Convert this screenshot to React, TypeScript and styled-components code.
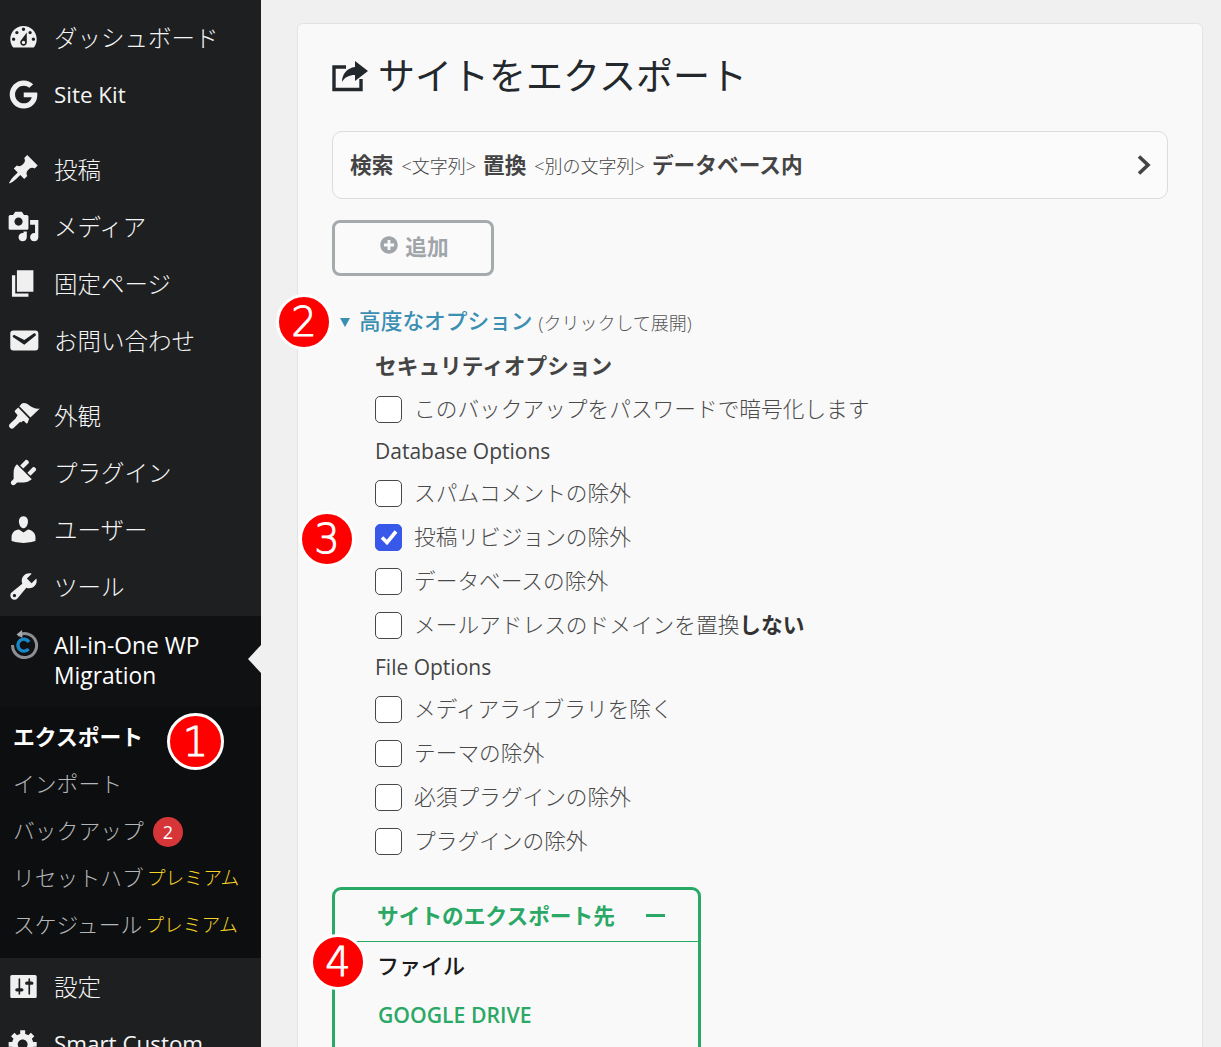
import React from "react";
import styled, { createGlobalStyle } from "styled-components";
import { FaGoogle, FaPlusCircle } from "react-icons/fa";

const FONT = `"Open Sans", "Noto Sans CJK JP", sans-serif`;

const Global = createGlobalStyle`
  html, body { margin: 0; padding: 0; height: 1047px; overflow: hidden; background: #f0f0f1; }
  * { box-sizing: border-box; }
  body { font-family: ${FONT}; }
`;

const Page = styled.div`
  position: relative;
  display: flex;
  width: 1221px;
  height: 1047px;
  overflow: hidden;
  background: #f0f0f1;
`;

/* Japanese glyphs sit lower than in the reference font: lifts a label within its centred row */
const Lift = styled.span`
  display: inline-block;
  padding-bottom: ${(p: { $by?: number }) => p.$by ?? 4}px;
`;

const Sidebar = styled.aside`
  flex: 0 0 261px;
  height: 1047px;
  padding-top: 9px;
  background: #1e1f21;
  overflow: hidden;
`;

const MenuGroup = styled.div`
  margin-bottom: ${(p: { $gap?: boolean }) => (p.$gap ? "18px" : "0")};
`;

const MenuRow = styled.div<{ $latin?: boolean }>`
  display: flex;
  align-items: center;
  height: 57px;
  color: #f5f5f5;
  font-size: ${(p) => (p.$latin ? "22.4px" : "23.5px")};
  font-weight: ${(p) => (p.$latin ? 400 : 300)};
  white-space: nowrap;
`;

const IconSlot = styled.span`
  flex: 0 0 54px;
  display: flex;
  justify-content: center;
  padding-right: 7px;
  color: #f0f0f1;
`;

const ActiveRow = styled.div`
  position: relative;
  display: flex;
  align-items: center;
  height: 90px;
  margin-top: 1px;
  background: #101113;
  color: #fff;
  font-size: 22.8px;
  line-height: 30px;
`;

const ActiveIcon = styled(IconSlot)`
  align-self: flex-start;
  margin-top: 13px;
`;

const ActiveNotch = styled.span`
  position: absolute;
  right: 0;
  top: 29px;
  border-style: solid;
  border-width: 14px 13px 14px 0;
  border-color: transparent #f0f0f1 transparent transparent;
`;

const SubMenu = styled.div`
  height: 252px;
  padding-top: 8px;
  background: #0d0e0f;
`;

const SubItem = styled.div<{ $current?: boolean }>`
  display: flex;
  align-items: center;
  height: 47px;
  padding-left: 13px;
  color: ${(p) => (p.$current ? "#fff" : "#b4b6b9")};
  font-size: 21.8px;
  font-weight: ${(p) => (p.$current ? 700 : 300)};
  white-space: nowrap;
`;

const CountBubble = styled.span`
  display: inline-flex;
  align-items: center;
  justify-content: center;
  width: 30px;
  height: 30px;
  margin-left: 9px;
  border-radius: 50%;
  background: #d63638;
  color: #fff;
  font-size: 18px;
  font-weight: 400;
`;

const Premium = styled.span`
  margin-left: 3px;
  color: #f5d327;
  font-size: 18.8px;
  font-weight: 300;
`;

const Main = styled.main`
  flex: 1;
  padding: 23px 18px 0 36px;
`;

const Card = styled.section`
  height: 1100px;
  padding: 27px 34px 0 34px;
  background: #f9f9f9;
  border: 1px solid #e2e3e4;
  border-radius: 6px;
`;

const Title = styled.h1`
  display: flex;
  align-items: center;
  gap: 10px;
  height: 50px;
  margin: 0;
  color: #23282d;
  font-size: 37px;
  font-weight: 400;
  white-space: nowrap;
`;

const SearchBox = styled.div`
  display: flex;
  align-items: center;
  height: 68px;
  margin-top: 30px;
  padding: 0 15px 0 17px;
  background: #fbfbfb;
  border: 1px solid #dcdcde;
  border-radius: 10px;
  color: #444;
  white-space: nowrap;
`;

const SearchStrong = styled(Lift)`
  font-size: 21.7px;
  font-weight: 700;
`;

const SearchHint = styled.span`
  margin: 0 7px 0 8px;
  font-size: 18px;
  font-weight: 300;
`;

const Chevron = styled.svg`
  margin-left: auto;
`;

const AddButton = styled.button`
  display: flex;
  align-items: center;
  justify-content: center;
  gap: 7px;
  width: 162px;
  height: 56px;
  margin-top: 21px;
  padding: 0 0 6px 3px;
  background: #fafafa;
  border: 3px solid #a5abad;
  border-radius: 8px;
  color: #a0a5aa;
  font-family: ${FONT};
  font-size: 21.7px;
  font-weight: 700;
`;

const AdvancedToggle = styled.div`
  display: flex;
  align-items: center;
  height: 30px;
  margin: 31px 0 7px 8px;
  white-space: nowrap;
`;

const Triangle = styled.span`
  width: 0;
  height: 0;
  margin-right: 9px;
  border-style: solid;
  border-width: 9px 5px 0 5px;
  border-color: #3a8fb0 transparent transparent transparent;
`;

const AdvancedTitle = styled(Lift)`
  color: #3a8fb2;
  font-size: 21.7px;
  font-weight: 500;
`;

const AdvancedHint = styled.span`
  margin-left: 6px;
  color: #555;
  font-size: 18px;
  font-weight: 300;
`;

const Options = styled.div`
  margin-left: 43px;
`;

const OptionHeading = styled.div`
  display: flex;
  align-items: center;
  height: 43px;
  padding-bottom: 2px;
  color: #444;
  font-size: 21.7px;
  font-weight: 700;
`;

const GroupLabel = styled.div`
  display: flex;
  align-items: center;
  height: 40px;
  color: #444;
  font-size: 21px;
  font-weight: 400;
`;

const CheckRow = styled.label`
  display: flex;
  align-items: center;
  gap: 12px;
  height: 44px;
  color: #4a4a4a;
  font-size: 21.7px;
  font-weight: 300;
  white-space: nowrap;

  strong {
    color: #333;
    font-weight: 700;
  }
`;

const CheckBox = styled.span<{ $checked?: boolean }>`
  display: flex;
  align-items: center;
  justify-content: center;
  width: 27px;
  height: 27px;
  border: 1.5px solid ${(p) => (p.$checked ? "#3858e9" : "#45484b")};
  border-radius: 5px;
  background: ${(p) => (p.$checked ? "#3858e9" : "#fff")};
`;

const Destination = styled.div`
  width: 369px;
  height: 300px;
  margin: 24px 0 0 0;
  border: 3px solid #2aa866;
  border-radius: 9px;
`;

const DestHeader = styled.div`
  display: flex;
  align-items: center;
  height: 52px;
  padding: 0 33px 0 42px;
  border-bottom: 1px solid #2aa866;
  color: #2aa866;
  font-size: 21.7px;
  font-weight: 700;
  white-space: nowrap;
`;

const Minus = styled.span`
  width: 19px;
  height: 3px;
  margin-left: auto;
  background: #2aa866;
`;

const DestItem = styled.div<{ $active?: boolean }>`
  display: flex;
  align-items: center;
  height: 48px;
  padding-left: ${(p) => (p.$active ? "42px" : "43px")};
  color: ${(p) => (p.$active ? "#1a1a1a" : "#2aa866")};
  font-size: ${(p) => (p.$active ? "22px" : "21.2px")};
  font-weight: ${(p) => (p.$active ? 500 : 600)};
`;

const Marker = styled.span<{ $x: number; $y: number; $size: number }>`
  position: absolute;
  left: ${(p) => p.$x}px;
  top: ${(p) => p.$y}px;
  display: flex;
  align-items: center;
  justify-content: center;
  width: ${(p) => p.$size}px;
  height: ${(p) => p.$size}px;
  border: 3px solid #fff;
  border-radius: 50%;
  background: #fe0000;
  color: #fff;
  font-family: "DejaVu Sans", sans-serif;
  font-size: 40px;
  font-weight: 200;
  line-height: 1;
  -webkit-text-stroke: 1px #fff;
`;

const Dash = ({ d }: { d: string }) => (
  <svg width="33" height="33" viewBox="0 0 20 20" fill="currentColor" fillRule="evenodd">
    <path d={d} />
  </svg>
);

const ICONS = {
  dashboard:
    "M3.76 16h12.48c1.1-1.37 1.76-3.11 1.76-5 0-4.42-3.58-8-8-8s-8 3.58-8 8c0 1.89.66 3.63 1.76 5zM10 4c.55 0 1 .45 1 1s-.45 1-1 1-1-.45-1-1 .45-1 1-1zM6 6c.55 0 1 .45 1 1s-.45 1-1 1-1-.45-1-1 .45-1 1-1zm8 0c.55 0 1 .45 1 1s-.45 1-1 1-1-.45-1-1 .45-1 1-1zm-5.37 5.55L12 7v6c0 1.1-.9 2-2 2s-2-.9-2-2c0-.57.24-1.08.63-1.45zM4 10c.55 0 1 .45 1 1s-.45 1-1 1-1-.45-1-1 .45-1 1-1zm12 0c.55 0 1 .45 1 1s-.45 1-1 1-1-.45-1-1 .45-1 1-1zm-5 3c0-.55-.45-1-1-1s-1 .45-1 1 .45 1 1 1 1-.45 1-1z",
  pin: "M10.44 3.02l1.82-1.82 6.36 6.35-1.83 1.82c-1.05-.68-2.48-.57-3.41.36l-.75.75c-.92.93-1.04 2.35-.35 3.41l-1.83 1.82-2.41-2.41-2.8 2.79c-.42.42-3.38 2.71-3.8 2.29s1.86-3.39 2.28-3.81l2.79-2.79L4.1 9.36l1.83-1.82c1.05.69 2.48.57 3.4-.36l.75-.75c.93-.92 1.05-2.35.36-3.41z",
  media:
    "M13 11V4c0-.55-.45-1-1-1h-1.67L9 1H5L3.67 3H2c-.55 0-1 .45-1 1v7c0 .55.45 1 1 1h10c.55 0 1-.45 1-1zM7 4.5c1.38 0 2.5 1.12 2.5 2.5S8.38 9.5 7 9.5 4.5 8.38 4.5 7 5.62 4.5 7 4.5zM14 6h5v10.5c0 1.38-1.12 2.5-2.5 2.5S14 17.88 14 16.5s1.12-2.5 2.5-2.5c.17 0 .34.02.5.05V9h-3V6zm-4 8.05V13h2v3.5c0 1.38-1.12 2.5-2.5 2.5S7 17.88 7 16.5 8.12 14 9.5 14c.17 0 .34.02.5.05z",
  page: "M6 15V2h10v13H6zm-1 1h8v2H3V5h2v11z",
  mail: "M3.87 4h13.25C18.37 4 19 4.59 19 5.79v8.42c0 1.19-.63 1.79-1.88 1.79H3.87c-1.25 0-1.88-.6-1.88-1.79V5.79c0-1.2.63-1.79 1.88-1.79zm6.62 8.6l6.74-5.53c.24-.2.43-.66.13-1.07-.29-.41-.82-.42-1.17-.17l-5.7 3.86L4.8 6.83c-.35-.25-.88-.24-1.17.17-.3.41-.11.87.13 1.07z",
  plugin:
    "M13.11 4.36L9.87 7.6 8 5.73l3.24-3.24c.35-.34 1.05-.2 1.56.32.52.51.66 1.21.31 1.55zm-8 1.77l.91-1.12 9.01 9.01-1.19.84c-.71.71-2.63 1.16-3.82 1.16H6.14L4.9 17.26c-.59.59-1.54.59-2.12 0-.59-.58-.59-1.53 0-2.12l1.24-1.24v-3.88c0-1.13.4-3.19 1.09-3.89zm7.26 3.97l3.24-3.24c.34-.35 1.04-.21 1.55.31.52.51.66 1.21.31 1.55l-3.24 3.25z",
  user: "M10 9.25c-2.27 0-2.73-3.44-2.73-3.44C7 4.02 7.82 2 9.97 2c2.16 0 2.98 2.02 2.71 3.81 0 0-.41 3.44-2.68 3.44zm0 2.57L12.72 10c2.39 0 4.52 2.33 4.52 4.53v2.49s-3.65 1.13-7.24 1.13c-3.65 0-7.24-1.13-7.24-1.13v-2.49c0-2.25 1.94-4.48 4.47-4.48z",
  tools:
    "M16.68 9.77c-1.34 1.34-3.3 1.67-4.95.99l-5.41 6.52c-.99.99-2.59.99-3.58 0s-.99-2.59 0-3.57l6.52-5.42c-.68-1.65-.35-3.61.99-4.95 1.28-1.28 3.12-1.62 4.72-1.06l-2.89 2.89 2.82 2.82 2.86-2.87c.53 1.58.18 3.39-1.08 4.65zM3.81 16.21c.4.39 1.04.39 1.43 0 .4-.4.4-1.04 0-1.43-.39-.4-1.03-.4-1.43 0-.39.39-.39 1.03 0 1.43z",
  settings:
    "M18 16V4c0-.55-.45-1-1-1H3c-.55 0-1 .45-1 1v12c0 .55.45 1 1 1h14c.55 0 1-.45 1-1zM8 11h1c.55 0 1 .45 1 1s-.45 1-1 1H8v1.5c0 .28-.22.5-.5.5s-.5-.22-.5-.5V13H6c-.55 0-1-.45-1-1s.45-1 1-1h1V5.5c0-.28.22-.5.5-.5s.5.22.5.5V11zm5-2h-1c-.55 0-1-.45-1-1s.45-1 1-1h1V5.5c0-.28.22-.5.5-.5s.5.22.5.5V7h1c.55 0 1 .45 1 1s-.45 1-1 1h-1v5.5c0 .28-.22.5-.5.5s-.5-.22-.5-.5V9z",
  gear: "M18 12h-2.18c-.17.7-.44 1.35-.81 1.93l1.54 1.54-2.1 2.1-1.54-1.54c-.58.36-1.23.63-1.91.79V19H8v-2.18c-.68-.16-1.33-.43-1.91-.79l-1.54 1.54-2.12-2.12 1.54-1.54c-.36-.58-.63-1.23-.79-1.91H1V9.03h2.17c.16-.7.44-1.35.8-1.94L2.43 5.55l2.1-2.1 1.54 1.54c.58-.37 1.24-.64 1.93-.81V2h3v2.18c.68.16 1.33.43 1.91.79l1.54-1.54 2.12 2.12-1.54 1.54c.36.59.64 1.24.8 1.94H18V12zm-8.5 1.5c1.66 0 3-1.34 3-3s-1.34-3-3-3-3 1.34-3 3 1.34 3 3 3z",
};

const BrushIcon = () => (
  <svg width="33" height="33" viewBox="0 0 20 20" fill="currentColor">
    <path d="M14.2 11.2L7.5 4.4l1.5-1.7c.9-.6 2.3-.3 3.4.3 1.2.8 1.6 1.3 3 2 1.2.6 2.5 1.1 4.5.7z" />
    <path d="M13.4 11.9L6.8 5.1 5 6.8c-.4.4-.4 1 0 1.4l1 1c.4.4.4 1 0 1.4l-.6.6 3.1 3.1.7-.6c.4-.4 1-.4 1.4 0l1 1c.3.2.7.1.9-.1z" />
    <path d="M7 12.4L3 16.2" fill="none" stroke="currentColor" strokeWidth="3.4" strokeLinecap="round" />
  </svg>
);

const AioLogo = () => (
  <svg width="30" height="32" viewBox="0 0 30 32" fill="none">
    <path d="M9 6.5 A12 12 0 1 1 3.6 16" stroke="#8c8f94" strokeWidth="3" />
    <path d="M13 1 L7.5 5.5 L13.5 9 Z" fill="#a7aaad" />
    <path d="M19.5 20 A6 6 0 1 1 20 13" stroke="#1787c9" strokeWidth="3.4" />
  </svg>
);

const ExportIcon = () => (
  <svg width="36" height="32" viewBox="0 0 36 32" fill="none">
    <path d="M14 7 H2 V29.5 H29 V19" stroke="#23282d" strokeWidth="3.4" />
    <path d="M23 1 L36 11 L23 21 V15 C17 15 13 17 10 22 C10 14 15 8 23 7 Z" fill="#23282d" />
  </svg>
);

const Item = ({ icon, latin, children }: { icon: React.ReactNode; latin?: boolean; children: React.ReactNode }) => (
  <MenuRow $latin={latin}>
    <IconSlot>{icon}</IconSlot>
    <Lift $by={latin ? 0 : 2}>{children}</Lift>
  </MenuRow>
);

const Check = ({ checked, children }: { checked?: boolean; children: React.ReactNode }) => (
  <CheckRow>
    <CheckBox $checked={checked}>
      {checked && (
        <svg width="20" height="18" viewBox="0 0 20 18" fill="none">
          <path d="M3 9.5 L8 14.5 L17 3.5" stroke="#fff" strokeWidth="3.6" />
        </svg>
      )}
    </CheckBox>
    <Lift>{children}</Lift>
  </CheckRow>
);

export default function App() {
  return (
    <Page>
      <Global />
      <Sidebar>
        <MenuGroup $gap>
          <Item icon={<Dash d={ICONS.dashboard} />}>ダッシュボード</Item>
          <Item latin icon={<FaGoogle size={29} />}>Site Kit</Item>
        </MenuGroup>
        <MenuGroup $gap>
          <Item icon={<Dash d={ICONS.pin} />}>投稿</Item>
          <Item icon={<Dash d={ICONS.media} />}>メディア</Item>
          <Item icon={<Dash d={ICONS.page} />}>固定ページ</Item>
          <Item icon={<Dash d={ICONS.mail} />}>お問い合わせ</Item>
        </MenuGroup>
        <MenuGroup>
          <Item icon={<BrushIcon />}>外観</Item>
          <Item icon={<Dash d={ICONS.plugin} />}>プラグイン</Item>
          <Item icon={<Dash d={ICONS.user} />}>ユーザー</Item>
          <Item icon={<Dash d={ICONS.tools} />}>ツール</Item>
        </MenuGroup>
        <ActiveRow>
          <ActiveIcon>
            <AioLogo />
          </ActiveIcon>
          <span>
            All-in-One WP
            <br />
            Migration
          </span>
          <ActiveNotch />
        </ActiveRow>
        <SubMenu>
          <SubItem $current><Lift>エクスポート</Lift></SubItem>
          <SubItem><Lift>インポート</Lift></SubItem>
          <SubItem>
            <Lift>バックアップ</Lift>
            <CountBubble>2</CountBubble>
          </SubItem>
          <SubItem>
            <Lift>リセットハブ</Lift>
            <Premium><Lift>プレミアム</Lift></Premium>
          </SubItem>
          <SubItem>
            <Lift>スケジュール</Lift>
            <Premium><Lift>プレミアム</Lift></Premium>
          </SubItem>
        </SubMenu>
        <Item icon={<Dash d={ICONS.settings} />}>設定</Item>
        <Item latin icon={<Dash d={ICONS.gear} />}>Smart Custom</Item>
      </Sidebar>
      <Main>
        <Card>
          <Title>
            <ExportIcon />
            <Lift>サイトをエクスポート</Lift>
          </Title>
          <SearchBox>
            <SearchStrong>検索</SearchStrong>
            <SearchHint>&lt;文字列&gt;</SearchHint>
            <SearchStrong>置換</SearchStrong>
            <SearchHint>&lt;別の文字列&gt;</SearchHint>
            <SearchStrong>データベース内</SearchStrong>
            <Chevron width="16" height="22" viewBox="0 0 16 22" fill="none">
              <path d="M3 2.5 L12 11 L3 19.5" stroke="#444" strokeWidth="3.6" />
            </Chevron>
          </SearchBox>
          <AddButton>
            <FaPlusCircle size={18} />
            追加
          </AddButton>
          <AdvancedToggle>
            <Triangle />
            <AdvancedTitle $by={5}>高度なオプション</AdvancedTitle>
            <AdvancedHint>(クリックして展開)</AdvancedHint>
          </AdvancedToggle>
          <Options>
            <OptionHeading>セキュリティオプション</OptionHeading>
            <Check>このバックアップをパスワードで暗号化します</Check>
            <GroupLabel>Database Options</GroupLabel>
            <Check>スパムコメントの除外</Check>
            <Check checked>投稿リビジョンの除外</Check>
            <Check>データベースの除外</Check>
            <Check>
              メールアドレスのドメインを置換<strong>しない</strong>
            </Check>
            <GroupLabel>File Options</GroupLabel>
            <Check>メディアライブラリを除く</Check>
            <Check>テーマの除外</Check>
            <Check>必須プラグインの除外</Check>
            <Check>プラグインの除外</Check>
          </Options>
          <Destination>
            <DestHeader>
              <Lift $by={2}>サイトのエクスポート先</Lift>
              <Minus />
            </DestHeader>
            <DestItem $active><Lift $by={5}>ファイル</Lift></DestItem>
            <DestItem>GOOGLE DRIVE</DestItem>
          </Destination>
        </Card>
      </Main>
      <Marker $x={167} $y={713} $size={57}>1</Marker>
      <Marker $x={276} $y={294} $size={56}>2</Marker>
      <Marker $x={299} $y={511} $size={56}>3</Marker>
      <Marker $x={310} $y={934} $size={56}>4</Marker>
    </Page>
  );
}
